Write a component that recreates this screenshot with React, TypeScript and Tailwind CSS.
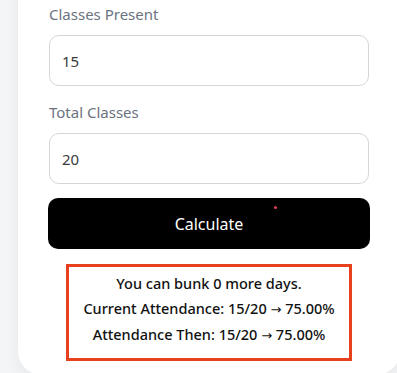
import React from "react";

const fields = [
    { label: "Classes Present", value: "15" },
    { label: "Total Classes", value: "20" },
];

const results: [string, string?][] = [
    ["You can bunk 0 more days."],
    ["Current Attendance: 15/20 ", " 75.00%"],
    ["Attendance Then: 15/20 ", " 75.00%"],
];

const App = () => {
    return (
        <div
            className="h-[373px] w-[397px] overflow-hidden bg-[#f4f5f7]"
            style={{ fontFamily: '"Noto Sans", "Open Sans", sans-serif' }}
        >
            <div className="ml-[18px] -mt-6 w-[382px] rounded-b-[24px] bg-white px-[31px] pt-[27px] pb-[14px] shadow-[0_4px_16px_rgba(0,0,0,0.06)]">
                {fields.map((field, i) => (
                    <div key={field.label} className={i > 0 ? "mt-[15px]" : ""}>
                        <label className="block text-[15px] leading-[22px] text-[#6b7280]">
                            {field.label}
                        </label>
                        <input
                            readOnly
                            value={field.value}
                            className="mt-[10px] h-[51px] w-full rounded-[10px] border border-[#d6d6d6] bg-white px-[12px] text-[15px] text-[#3a3a3a] outline-none"
                        />
                    </div>
                ))}

                <button className="relative mt-[14px] -mx-px flex h-[51px] w-[322px] items-center justify-center rounded-[10px] bg-black text-[16px] text-white">
                    Calculate
                    <span className="absolute left-[226px] top-[8px] h-[3px] w-[3px] rounded-full bg-[#e0405a]" />
                </button>

                <div className="mt-[15px] flex justify-center">
                    <div className="border-[3px] border-[#e8401c] px-[14px] pt-[4px] pb-[9px] text-center">
                        {results.map(([before, after]) => (
                            <p key={before} className="text-[14.5px] leading-[24.5px] font-medium text-[#111]">
                                {before}
                                {after !== undefined && (
                                    <>
                                        <span style={{ fontFamily: '"DejaVu Sans", sans-serif' }} className="text-[13px]">→</span>
                                        {after}
                                    </>
                                )}
                            </p>
                        ))}
                    </div>
                </div>
            </div>
        </div>
    );
};

export default App;
